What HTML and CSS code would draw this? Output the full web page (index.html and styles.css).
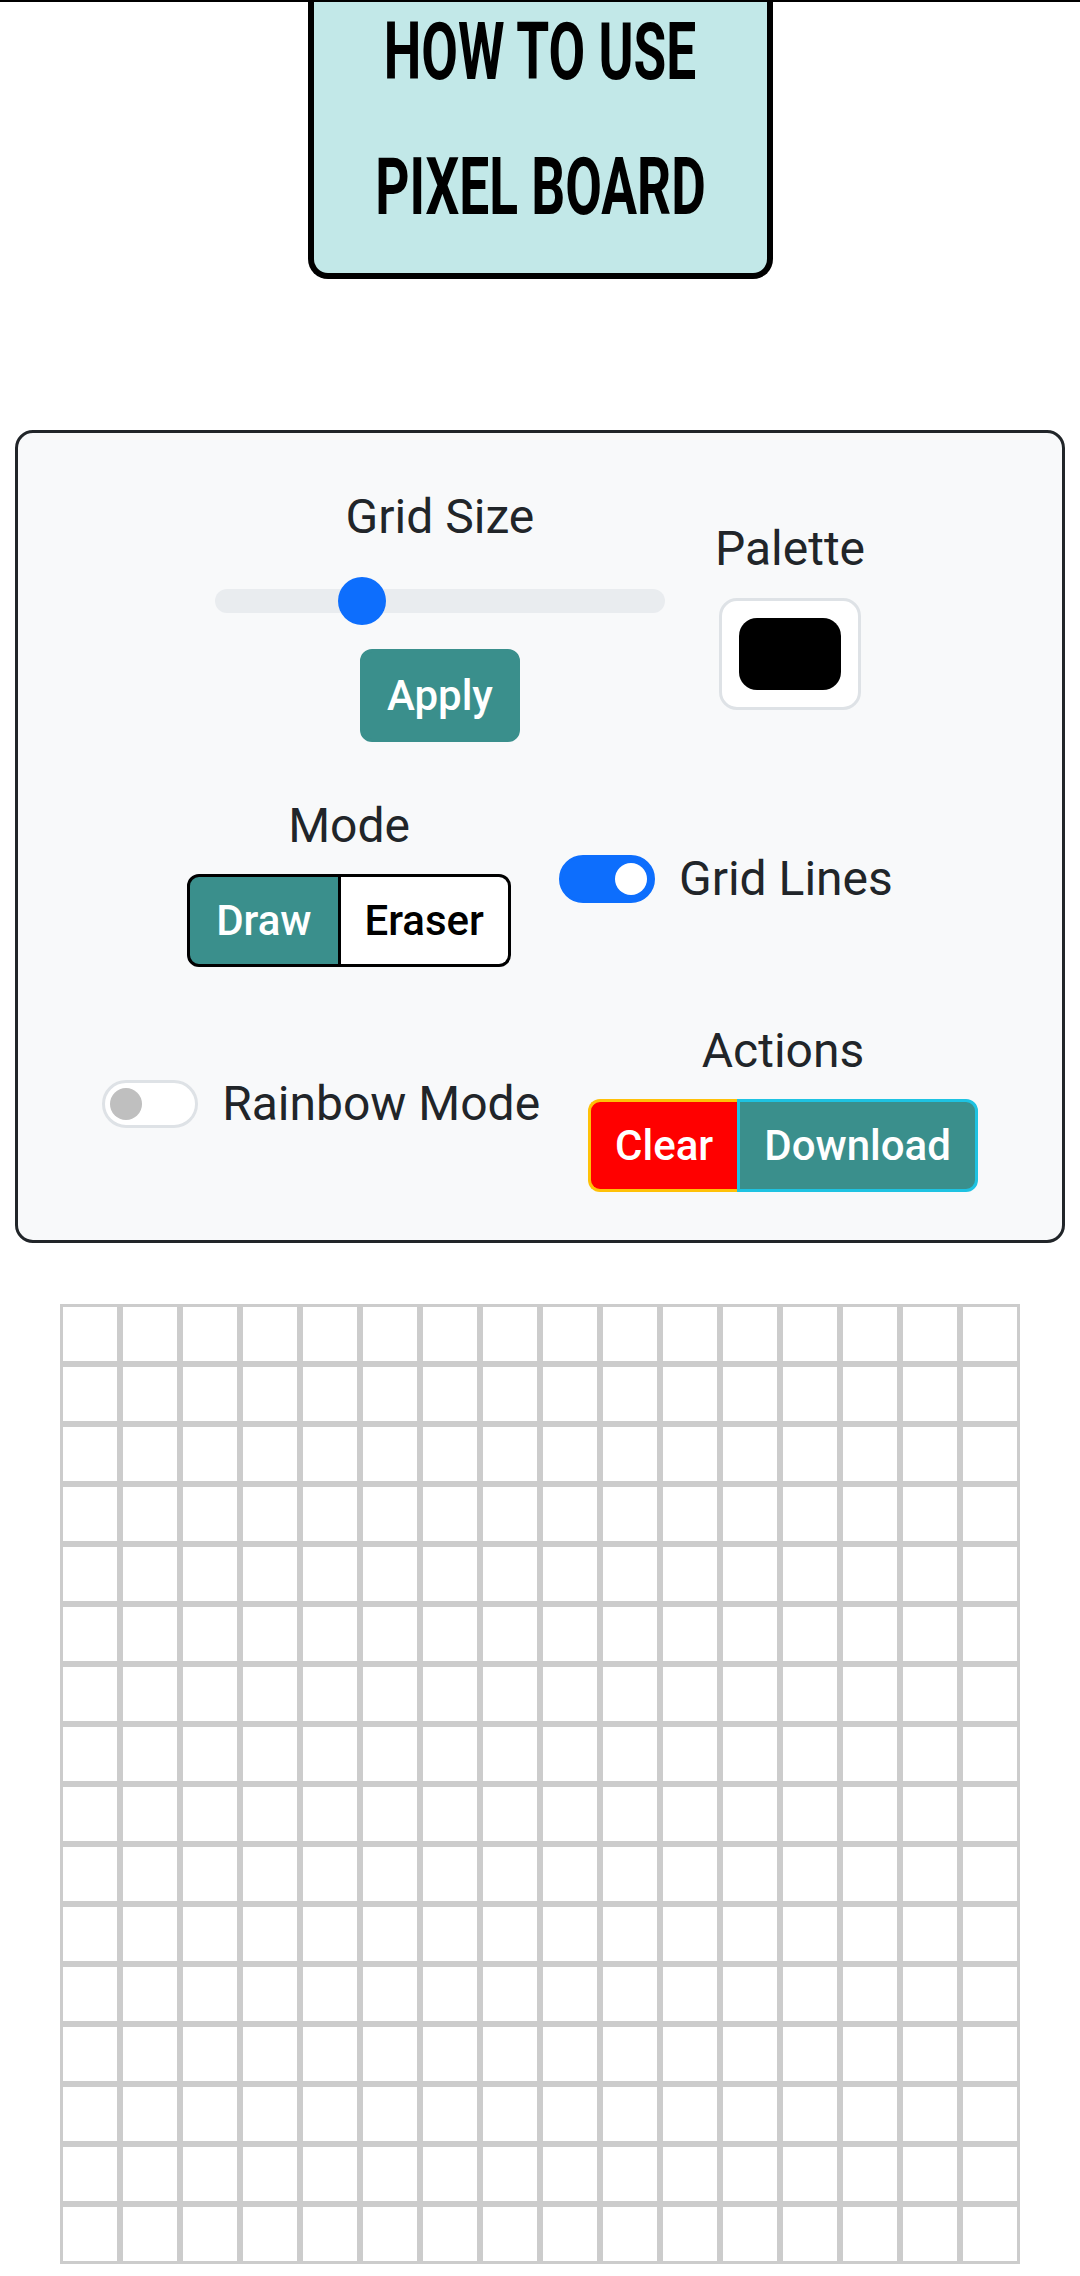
FILE: index.html
```html
<!DOCTYPE html>
<html lang="en">
<head>
<meta charset="utf-8">
<title>Pixel Board</title>
<link rel="stylesheet" href="styles.css">
</head>
<body>
<div class="topbar"></div>
<header class="title-box">
  <div class="title-line"><span>HOW TO USE</span></div>
  <div class="title-line second"><span>PIXEL BOARD</span></div>
</header>

<section class="panel">
  <div class="row">
    <div class="block grid-size">
      <div class="label">Grid Size</div>
      <div class="slider">
        <div class="track"></div>
        <div class="thumb"></div>
      </div>
      <button class="btn teal apply">Apply</button>
    </div>
    <div class="block palette">
      <div class="label">Palette</div>
      <div class="color-box"><div class="swatch"></div></div>
    </div>
  </div>

  <div class="row">
    <div class="block">
      <div class="label">Mode</div>
      <div class="group mode-group">
        <button class="btn teal draw">Draw</button>
        <button class="btn eraser">Eraser</button>
      </div>
    </div>
    <div class="check">
      <span class="switch on"><span class="knob"></span></span>
      <span class="check-label">Grid Lines</span>
    </div>
  </div>

  <div class="row">
    <div class="check">
      <span class="switch off"><span class="knob"></span></span>
      <span class="check-label">Rainbow Mode</span>
    </div>
    <div class="block">
      <div class="label">Actions</div>
      <div class="group">
        <button class="btn clear">Clear</button>
        <button class="btn teal download">Download</button>
      </div>
    </div>
  </div>
</section>

<div class="board">
<span></span><span></span><span></span><span></span><span></span><span></span><span></span><span></span><span></span><span></span><span></span><span></span><span></span><span></span><span></span><span></span>
<span></span><span></span><span></span><span></span><span></span><span></span><span></span><span></span><span></span><span></span><span></span><span></span><span></span><span></span><span></span><span></span>
<span></span><span></span><span></span><span></span><span></span><span></span><span></span><span></span><span></span><span></span><span></span><span></span><span></span><span></span><span></span><span></span>
<span></span><span></span><span></span><span></span><span></span><span></span><span></span><span></span><span></span><span></span><span></span><span></span><span></span><span></span><span></span><span></span>
<span></span><span></span><span></span><span></span><span></span><span></span><span></span><span></span><span></span><span></span><span></span><span></span><span></span><span></span><span></span><span></span>
<span></span><span></span><span></span><span></span><span></span><span></span><span></span><span></span><span></span><span></span><span></span><span></span><span></span><span></span><span></span><span></span>
<span></span><span></span><span></span><span></span><span></span><span></span><span></span><span></span><span></span><span></span><span></span><span></span><span></span><span></span><span></span><span></span>
<span></span><span></span><span></span><span></span><span></span><span></span><span></span><span></span><span></span><span></span><span></span><span></span><span></span><span></span><span></span><span></span>
<span></span><span></span><span></span><span></span><span></span><span></span><span></span><span></span><span></span><span></span><span></span><span></span><span></span><span></span><span></span><span></span>
<span></span><span></span><span></span><span></span><span></span><span></span><span></span><span></span><span></span><span></span><span></span><span></span><span></span><span></span><span></span><span></span>
<span></span><span></span><span></span><span></span><span></span><span></span><span></span><span></span><span></span><span></span><span></span><span></span><span></span><span></span><span></span><span></span>
<span></span><span></span><span></span><span></span><span></span><span></span><span></span><span></span><span></span><span></span><span></span><span></span><span></span><span></span><span></span><span></span>
<span></span><span></span><span></span><span></span><span></span><span></span><span></span><span></span><span></span><span></span><span></span><span></span><span></span><span></span><span></span><span></span>
<span></span><span></span><span></span><span></span><span></span><span></span><span></span><span></span><span></span><span></span><span></span><span></span><span></span><span></span><span></span><span></span>
<span></span><span></span><span></span><span></span><span></span><span></span><span></span><span></span><span></span><span></span><span></span><span></span><span></span><span></span><span></span><span></span>
<span></span><span></span><span></span><span></span><span></span><span></span><span></span><span></span><span></span><span></span><span></span><span></span><span></span><span></span><span></span><span></span>
</div>
</body>
</html>
```

FILE: styles.css
```css
* { box-sizing: border-box; }

body {
  margin: 0;
  background: #ffffff;
  font-family: Roboto, "Noto Sans", Arial, sans-serif;
  font-size: 48px;
  color: #212529;
}

.topbar {
  height: 2px;
  background: #000;
}

.title-box {
  width: 465px;
  margin: 0 auto;
  background: #c2e8e8;
  border: 6px solid #000;
  border-top: none;
  border-radius: 0 0 20px 20px;
  padding-bottom: 35px;
}

.title-line {
  display: flex;
  justify-content: center;
  height: 101px;
  line-height: 101px;
  font-family: Roboto, "Liberation Sans", sans-serif;
  font-weight: 700;
  font-size: 80px;
  color: #000;
  white-space: nowrap;
}

.title-line span {
  display: inline-block;
  transform: scaleX(0.665);
  transform-origin: center;
}

.title-line.second {
  margin-top: 34px;
}

.panel {
  margin: 151px 15px 0;
  background: #f8f9fa;
  border: 3px solid #212529;
  border-radius: 18px;
  padding: 48px 0;
  display: flex;
  flex-direction: column;
  gap: 48px;
}

.row {
  display: flex;
  justify-content: center;
  align-items: center;
  gap: 48px;
}

.row:first-child {
  gap: 50px;
}

.block {
  display: flex;
  flex-direction: column;
  align-items: center;
}

.label {
  line-height: 72px;
  height: 72px;
  white-space: nowrap;
}

.grid-size {
  width: 450px;
}

.slider {
  position: relative;
  width: 450px;
  height: 48px;
  margin-top: 24px;
  display: flex;
  align-items: center;
}

.track {
  width: 100%;
  height: 24px;
  border-radius: 12px;
  background: #e9ecef;
}

.thumb {
  position: absolute;
  left: 123px;
  top: 0;
  width: 48px;
  height: 48px;
  border-radius: 50%;
  background: #0d6efd;
}

.btn {
  font-family: Roboto, "Noto Sans", sans-serif;
  font-weight: 500;
  font-size: 42px;
  line-height: 63px;
  padding: 12px 24px;
  border: 3px solid transparent;
  border-radius: 12px;
  background: #fff;
  color: #000;
  margin: 0;
  white-space: nowrap;
}

.teal {
  background: #3a8f8c;
  border-color: #3a8f8c;
  color: #fff;
}

.apply {
  margin-top: 24px;
}

.palette .color-box {
  margin-top: 13px;
  width: 142px;
  height: 112px;
  padding: 17px;
  background: #fff;
  border: 3px solid #dee2e6;
  border-radius: 18px;
}

.swatch {
  width: 102px;
  height: 72px;
  background: #000;
  border-radius: 18px;
}

.group {
  display: flex;
  margin-top: 12px;
}

.mode-group .draw {
  border: 3px solid #000;
  border-radius: 12px 0 0 12px;
  padding: 12px 26px;
}

.mode-group .eraser {
  border: 3px solid #000;
  border-left: none;
  border-radius: 0 12px 12px 0;
  background: #fff;
  color: #000;
}

.clear {
  background: #ff0000;
  color: #fff;
  border: 3px solid #ffc107;
  border-right: none;
  border-radius: 12px 0 0 12px;
}

.download {
  border: 3px solid #1ec3e2;
  border-radius: 0 12px 12px 0;
}

.check {
  display: flex;
  align-items: center;
  height: 72px;
  gap: 24px;
}

.check-label {
  line-height: 72px;
  white-space: nowrap;
}

.switch {
  display: flex;
  align-items: center;
  width: 96px;
  height: 48px;
  border-radius: 24px;
  border: 3px solid #dee2e6;
  background: #fff;
  padding: 0 5px;
}

.knob {
  width: 32px;
  height: 32px;
  border-radius: 50%;
  background: #bfbfbf;
}

.switch.on {
  background: #0d6efd;
  border-color: #0d6efd;
  justify-content: flex-end;
}

.switch.on .knob {
  background: #fff;
}

.board {
  width: 960px;
  margin: 61px auto 0;
  display: grid;
  grid-template-columns: repeat(16, 60px);
  grid-auto-rows: 60px;
  background: #fff;
}

.board span {
  border: 3px solid #cccccc;
}
```
